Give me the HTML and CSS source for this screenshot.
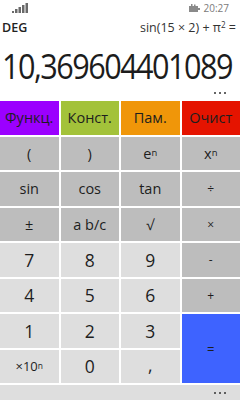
FILE: index.html
```html
<!DOCTYPE html>
<html lang="ru">
<head>
<meta charset="utf-8">
<link rel="stylesheet" href="styles.css">
</head>
<body>
<div class="screen">
  <div class="status">
    <svg class="signal" width="16" height="10" viewBox="0 0 16 10">
      <rect x="0" y="8" width="2" height="2"/>
      <rect x="3" y="6" width="2.5" height="4"/>
      <rect x="6.5" y="4" width="2.5" height="6"/>
      <rect x="10" y="2" width="2.5" height="8"/>
      <rect x="13.5" y="0" width="2.5" height="10"/>
    </svg>
    <div class="status-right">
      <svg class="battery" width="11" height="8" viewBox="0 0 11 8">
        <rect x="0" y="2" width="9" height="6"/>
        <rect x="2" y="0" width="1.5" height="2"/>
        <rect x="5" y="0.5" width="1.5" height="1.5"/>
        <rect x="9" y="4" width="2" height="2"/>
      </svg>
      <span class="time">20:27</span>
    </div>
  </div>
  <div class="info">
    <span class="mode">DEG</span>
    <span class="expr">sin(15 × 2) + π<sup>2</sup> =</span>
  </div>
  <div class="display"><span class="value">10,369604401089</span></div>
  <div class="more"><i class="dot"></i><i class="dot"></i><i class="dot"></i></div>
  <div class="pad">
    <div class="key k-func">Функц.</div>
    <div class="key k-const">Конст.</div>
    <div class="key k-mem">Пам.</div>
    <div class="key k-clear">Очист</div>

    <div class="key dark">(</div>
    <div class="key dark">)</div>
    <div class="key dark">e<sup>n</sup></div>
    <div class="key dark">x<sup>n</sup></div>

    <div class="key dark">sin</div>
    <div class="key dark">cos</div>
    <div class="key dark">tan</div>
    <div class="key dark op">÷</div>

    <div class="key dark">±</div>
    <div class="key dark">a b/c</div>
    <div class="key dark">√</div>
    <div class="key dark op">×</div>

    <div class="key light num">7</div>
    <div class="key light num">8</div>
    <div class="key light num">9</div>
    <div class="key dark op">-</div>

    <div class="key light num">4</div>
    <div class="key light num">5</div>
    <div class="key light num">6</div>
    <div class="key dark op">+</div>

    <div class="key light num">1</div>
    <div class="key light num">2</div>
    <div class="key light num">3</div>
    <div class="key k-eq">=</div>

    <div class="key light exp">×10<sup>n</sup></div>
    <div class="key light num">0</div>
    <div class="key light num comma">,</div>
  </div>
  <div class="appbar"><i class="dot"></i><i class="dot"></i><i class="dot"></i></div>
</div>
</body>
</html>
```

FILE: styles.css
```css
html, body {
  margin: 0;
  padding: 0;
  background: #ffffff;
}
.screen {
  width: 240px;
  height: 400px;
  display: flex;
  flex-direction: column;
  font-family: "Open Sans", "Noto Sans", sans-serif;
  color: #1e1e1e;
  overflow: hidden;
}
.status {
  height: 18px;
  display: flex;
  justify-content: space-between;
  align-items: flex-start;
  padding: 0 11px 0 12px;
}
.signal {
  margin-top: 3px;
  fill: #6a6a6a;
}
.status-right {
  display: flex;
  align-items: center;
  gap: 4px;
  margin-top: 2px;
}
.battery {
  fill: #8a8a8a;
}
.time {
  font-size: 10px;
  line-height: 12px;
  color: #7a7a7a;
}
.info {
  height: 20px;
  display: flex;
  justify-content: space-between;
  align-items: center;
  padding: 0 4px 0 2px;
  font-size: 12.5px;
  line-height: 20px;
}
.mode {
  font-weight: 600;
  color: #222;
}
.expr {
  color: #333;
}
.expr sup, .key sup {
  font-size: 0.65em;
  line-height: 0;
  vertical-align: 0.5em;
}
.display {
  height: 43px;
  padding-top: 7px;
  padding-left: 2px;
  white-space: nowrap;
}
.value {
  display: inline-block;
  font-size: 34px;
  line-height: 43px;
  letter-spacing: -1.7px;
  color: #1c1c1c;
  transform: scaleX(0.9);
  transform-origin: left center;
}
.more {
  height: 13px;
  box-sizing: border-box;
  display: flex;
  justify-content: flex-end;
  align-items: flex-start;
  gap: 3px;
  padding: 4px 14px 0 0;
}
.dot {
  display: block;
  width: 2px;
  height: 2px;
  border-radius: 50%;
  background: #333;
}
.pad {
  flex: 0 0 282px;
  display: grid;
  grid-template-columns: repeat(4, 1fr);
  grid-template-rows: repeat(8, 1fr);
  gap: 2px;
}
.key {
  display: flex;
  align-items: center;
  justify-content: center;
  font-size: 14.5px;
  color: #1e1e1e;
}
.k-func { background: #9b00ff; }
.k-const { background: #a3c23a; }
.k-mem { background: #f09609; }
.k-clear { background: #e51400; }
.dark { background: #bdbdbd; }
.light { background: #dedede; }
.num { font-size: 17.5px; }
.op { font-size: 12px; }
.exp { font-size: 13px; }
.comma { align-items: flex-end; padding-bottom: 6px; }
.k-eq {
  grid-row: span 2;
  background: #3e63ff;
  font-size: 13px;
}
.appbar {
  margin-top: 2px;
  flex: 1;
  background: #dedede;
  display: flex;
  justify-content: flex-end;
  align-items: center;
  gap: 3px;
  padding-right: 14px;
}
```
